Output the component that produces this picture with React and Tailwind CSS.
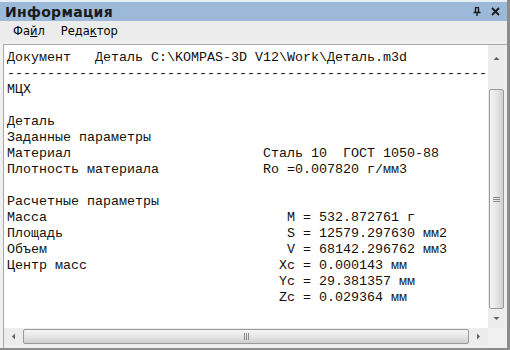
import React from 'react';

const lines = [
    'Документ   Деталь C:\\KOMPAS-3D V12\\Work\\Деталь.m3d',
    '-'.repeat(90),
    'МЦХ',
    '',
    'Деталь',
    'Заданные параметры',
    'Материал                        Сталь 10  ГОСТ 1050-88',
    'Плотность материала             Ro =0.007820 г/мм3',
    '',
    'Расчетные параметры',
    'Масса                              M = 532.872761 г',
    'Площадь                            S = 12579.297630 мм2',
    'Объем                              V = 68142.296762 мм3',
    'Центр масс                        Xc = 0.000143 мм',
    '                                  Yc = 29.381357 мм',
    '                                  Zc = 0.029364 мм',
];

const ui = { fontFamily: '"DejaVu Sans", Tahoma, sans-serif' };
const mono = { fontFamily: '"Liberation Mono", "Courier New", monospace' };

const Arrow = ({ dir }) => {
    const pts = {
        up: '0.5,4 3.5,1 6.5,4',
        down: '0.5,1 3.5,4 6.5,1',
        left: '4,0.5 1,3.5 4,6.5',
        right: '1,0.5 4,3.5 1,6.5',
    }[dir];
    const vertical = dir === 'up' || dir === 'down';
    return (
        <svg width={vertical ? 7 : 5} height={vertical ? 5 : 7} viewBox={vertical ? '0 0 7 5' : '0 0 5 7'}>
            <polygon points={pts} fill="#606060" />
        </svg>
    );
};

const App = () => {
    return (
        <div className="w-[510px] h-[350px] bg-[#f0f0f0] flex flex-col overflow-hidden border-r-[3px] border-b-[2px] border-[#8c8c8c]" style={ui}>
            {/* Title */}
            <div className="h-[21px] shrink-0 flex items-center justify-between pl-[5px] pr-[7px] bg-[#9db9d9] border-t-[2px] border-[#e8eef6]">
                <span className="text-[14px] font-bold text-[#1a1a1a] tracking-[0.3px] leading-none">Информация</span>
                <div className="flex items-center gap-[10px]">
                    <svg width="8" height="9" viewBox="0 0 8 9">
                        <path d="M2 0.5h4M2.5 0.5v5M5.5 0.5v5M0.5 5.5h7M4 5.5v3.5" stroke="#1a1a1a" strokeWidth="1.4" fill="none" />
                    </svg>
                    <svg width="9" height="9" viewBox="0 0 9 9">
                        <path d="M1 1l7 7M8 1l-7 7" stroke="#1a1a1a" strokeWidth="1.8" />
                    </svg>
                </div>
            </div>

            {/* Menu */}
            <div className="h-[21px] shrink-0 flex items-center gap-[16px] pl-[13px] bg-[#ececec] text-[11.5px] text-black">
                <span>Фа<span className="underline">й</span>л</span>
                <span>Реда<span className="underline">к</span>тор</span>
            </div>

            {/* Body */}
            <div className="flex-1 flex flex-col ml-[3px] mt-[2px] border-l border-t border-[#a8a8a8] bg-white min-h-0">
                <div className="flex-1 flex min-h-0">
                    <div className="flex-1 overflow-hidden pl-[3px] pt-[5px] text-[13.33px] leading-[16px] text-[#111] whitespace-pre" style={mono}>
                        {lines.map((l, i) => (
                            <div key={i} className="h-[16px]">{l}</div>
                        ))}
                    </div>
                    <div className="w-[17px] shrink-0 bg-[#ececec] flex flex-col items-center">
                        <div className="h-[26px] w-full flex items-center justify-center">
                            <Arrow dir="up" />
                        </div>
                        <div className="h-[18px]" />
                        <div className="flex-1 w-[15px] rounded-[2px] border border-[#9a9a9a] bg-gradient-to-r from-[#f4f4f4] via-[#e6e6e6] to-[#cfcfcf] flex items-center justify-center">
                            <div className="flex flex-col gap-[1px]">
                                <div className="w-[7px] h-[1px] bg-[#8a8a8a]" />
                                <div className="w-[7px] h-[1px] bg-[#8a8a8a]" />
                                <div className="w-[7px] h-[1px] bg-[#8a8a8a]" />
                            </div>
                        </div>
                        <div className="h-[19px] w-full flex items-center justify-center">
                            <Arrow dir="down" />
                        </div>
                    </div>
                    <div className="w-[2px] shrink-0 bg-[#f0f0f0]" />
                </div>
                <div className="h-[17px] shrink-0 flex bg-[#ececec]">
                    <div className="w-[19px] flex items-center justify-center">
                        <Arrow dir="left" />
                    </div>
                    <div className="flex-1 my-[1px] rounded-[2px] border border-[#9a9a9a] bg-gradient-to-b from-[#f4f4f4] via-[#e6e6e6] to-[#cfcfcf] flex items-center justify-center">
                        <div className="flex gap-[1px]">
                            <div className="w-[1px] h-[7px] bg-[#8a8a8a]" />
                            <div className="w-[1px] h-[7px] bg-[#8a8a8a]" />
                            <div className="w-[1px] h-[7px] bg-[#8a8a8a]" />
                        </div>
                    </div>
                    <div className="w-[19px] flex items-center justify-center">
                        <Arrow dir="right" />
                    </div>
                    <div className="w-[19px] bg-[#f0f0f0]" />
                </div>
                <div className="h-[3px] shrink-0 bg-[#f0f0f0]" />
            </div>
        </div>
    );
};

export default App;
